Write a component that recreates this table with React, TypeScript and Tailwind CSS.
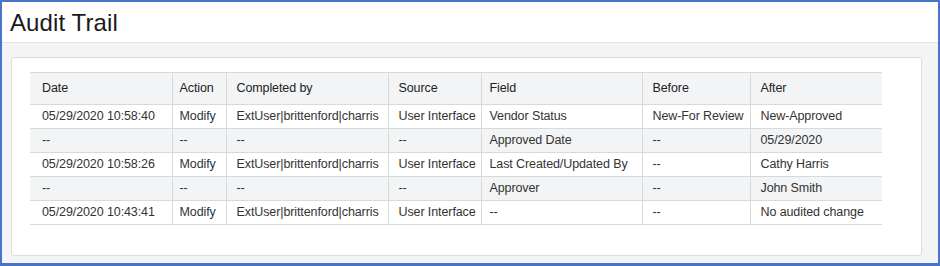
import React from "react"

const columns = [
  { label: "Date", width: "w-[142px]", pad: "pl-3 pr-2" },
  { label: "Action", width: "w-[54px]", pad: "px-[7px]" },
  { label: "Completed by", width: "w-[162px]", pad: "pl-2.5 pr-1" },
  { label: "Source", width: "w-[93px]", pad: "pl-2.5 pr-1" },
  { label: "Field", width: "w-[161px]", pad: "px-2" },
  { label: "Before", width: "w-[108px]", pad: "pl-2.5 pr-1" },
  { label: "After", width: "w-[132px]", pad: "px-2.5" },
]

const rows = [
  ["05/29/2020 10:58:40", "Modify", "ExtUser|brittenford|charris", "User Interface", "Vendor Status", "New-For Review", "New-Approved"],
  ["--", "--", "--", "--", "Approved Date", "--", "05/29/2020"],
  ["05/29/2020 10:58:26", "Modify", "ExtUser|brittenford|charris", "User Interface", "Last Created/Updated By", "--", "Cathy Harris"],
  ["--", "--", "--", "--", "Approver", "--", "John Smith"],
  ["05/29/2020 10:43:41", "Modify", "ExtUser|brittenford|charris", "User Interface", "--", "--", "No audited change"],
]

export default function App() {
  return (
    <div className="w-[940px] h-[266px] border-[#4a74c9] border-t-2 border-l-2 border-r-2 border-b-[3px] bg-[#f2f4f5] font-['Liberation_Sans',Arial,sans-serif] text-[#333]">
      {/* Header */}
      <div className="h-[41px] bg-white border-b border-[#e1e5e8] pl-2 pt-[7px]">
        <h1 className="text-[24px] leading-7 text-[#1a1a1a] tracking-[0.1px]">Audit Trail</h1>
      </div>

      {/* Card */}
      <div className="ml-[9px] mr-4 mt-[14px] h-[199px] bg-white border border-[#d9dee1] rounded-[3px] pl-[18px] pt-[14px]">
        <table className="table-fixed w-[852px] border-collapse text-[12.5px] leading-none tracking-[-0.1px]">
          <thead>
            <tr className="h-[32px] bg-[#f2f4f5]">
              {columns.map((c, i) => (
                <th
                  key={c.label}
                  className={`${c.width} ${c.pad} text-left font-normal text-[#222] border-y border-[#d5dadd] ${i > 0 ? "border-l" : ""}`}
                >
                  {c.label}
                </th>
              ))}
            </tr>
          </thead>
          <tbody>
            {rows.map((row, r) => (
              <tr key={r} className={`h-[24px] ${r % 2 === 1 ? "bg-[#f2f4f5]" : "bg-white"}`}>
                {row.map((cell, i) => (
                  <td
                    key={i}
                    className={`${columns[i].pad} whitespace-nowrap overflow-hidden border-b border-[#d5dadd] ${i > 0 ? "border-l" : ""}`}
                  >
                    {cell}
                  </td>
                ))}
              </tr>
            ))}
          </tbody>
        </table>
      </div>
    </div>
  )
}
